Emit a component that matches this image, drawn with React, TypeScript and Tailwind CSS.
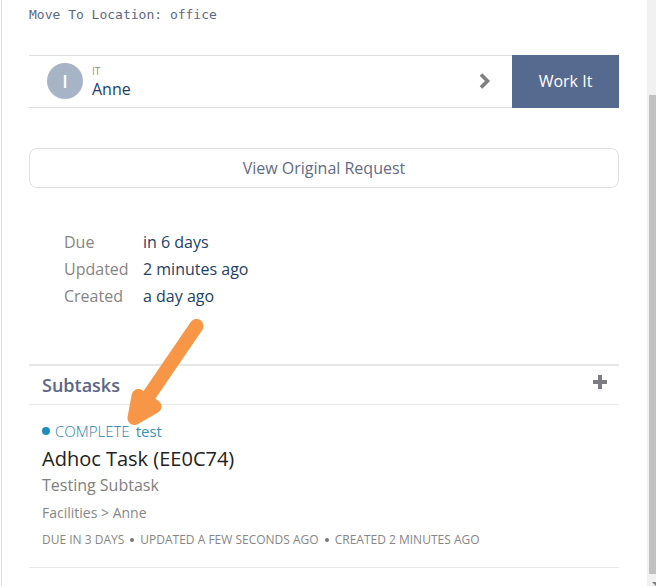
import { useState } from "react";

const details = [
	{ label: "Due", value: "in 6 days" },
	{ label: "Updated", value: "2 minutes ago" },
	{ label: "Created", value: "a day ago" },
];

const history = [
	"DUE IN 3 DAYS",
	"UPDATED A FEW SECONDS AGO",
	"CREATED 2 MINUTES AGO",
];

function AssigneeRow() {
	return (
		<div className="mt-[30px] flex h-[53px]">
			<button className="flex flex-1 items-center border-y border-[#dfdfe1] pl-[18px] pr-[21px] pb-0.5 text-left cursor-pointer">
				<span className="flex size-9 items-center justify-center rounded-full bg-[#a6b4c6] text-lg font-semibold text-white">
					I
				</span>
				<span className="ml-[9px] flex flex-1 flex-col pt-1">
					<span className="text-[10px] leading-3 text-[#909090]">IT</span>
					<span className="text-base leading-6 text-[#1d4068]">Anne</span>
				</span>
				<svg className="h-4 w-3" viewBox="0 0 12 16" aria-hidden="true">
					<path
						d="M2 1.5 8.5 8 2 14.5"
						fill="none"
						stroke="#7f7f7f"
						strokeWidth="3.6"
					/>
				</svg>
			</button>
			<button className="w-[107px] bg-[#56698f] pb-0.5 text-base text-white cursor-pointer">
				Work It
			</button>
		</div>
	);
}

function Subtasks() {
	const [adding, setAdding] = useState(false);

	return (
		<section className="relative mt-[54px]">
			<div className="flex h-[41px] items-center justify-between border-t-2 border-b border-t-[#e6e6e6] border-b-[#e8e8ea] pl-[13px] pr-3">
				<h2 className="text-lg font-semibold text-[#5a6688]">Subtasks</h2>
				<button
					aria-label="Add subtask"
					aria-pressed={adding}
					onClick={() => setAdding(!adding)}
					className="pb-1.5 cursor-pointer"
				>
					<svg className="size-3.5" viewBox="0 0 14 14" aria-hidden="true">
						<path d="M5 0h4v5h5v4H9v5H5V9H0V5h5z" fill="#7c7c82" />
					</svg>
				</button>
			</div>

			<article className="border-b border-[#e8e8ea] pt-[14px] pb-[17px] pl-[13px] text-[#7a7a7a]">
				<div className="flex items-center text-[15px] leading-6 font-light text-[#1b82ae]">
					<span className="size-2 rounded-full bg-[#1f8dbd]" />
					<span className="ml-[5px]">COMPLETE</span>
					<a href="#test" className="ml-1.5 font-normal text-[#3592b8]">
						test
					</a>
				</div>
				<h3 className="text-xl leading-8 text-[#222]">Adhoc Task (EE0C74)</h3>
				<p className="text-base leading-5 text-[#808080]">Testing Subtask</p>
				<p className="mt-2 text-sm leading-5 text-[#868686]">
					Facilities &gt; Anne
				</p>
				<ul className="mt-[7px] flex items-center text-xs leading-5 text-[#868686]">
					{history.map((entry, i) => (
						<li key={entry} className="flex items-center">
							{i > 0 && <span className="mx-1.5 size-1 rounded-full bg-[#777]" />}
							{entry}
						</li>
					))}
				</ul>
			</article>

			{/* Callout arrow pointing at the status */}
			<svg
				className="pointer-events-none absolute -top-[47px] left-[97px] h-[110px] w-20"
				viewBox="0 0 80 110"
				aria-hidden="true"
			>
				<path
					d="M70.5 9 22 80"
					stroke="#f79646"
					strokeWidth="14"
					strokeLinecap="round"
				/>
				<path
					d="M12.5 79 28.5 89.5 8.5 101z"
					fill="#f79646"
					stroke="#f79646"
					strokeWidth="14"
					strokeLinejoin="round"
				/>
			</svg>
		</section>
	);
}

function Scrollbar() {
	return (
		<div className="flex w-[9px] flex-col bg-[#f1f1f1] pl-0.5">
			<div className="h-[95px]" />
			<div className="flex-1 bg-[#c1c1c1]" />
			<div className="flex h-3 items-end justify-end overflow-hidden">
				<svg className="h-1.5 w-1" viewBox="0 0 4 6" aria-hidden="true">
					<path d="M0 2h4v4z" fill="#7f7f7f" />
				</svg>
			</div>
		</div>
	);
}

function App() {
	return (
		<div className="flex min-h-screen bg-white pl-px font-['Open_Sans',sans-serif]">
			<main className="flex-1 border-l border-[#dcdcdf] pl-[27px] pr-7">
				<p className="pt-[5px] font-['DejaVu_Sans_Mono',monospace] text-[13px] leading-5 text-[#5c6884]">
					Move To Location: office
				</p>

				<AssigneeRow />

				<button className="mt-10 h-10 w-full rounded-lg border border-[#dfdfe3] text-base text-[#5f6b87] cursor-pointer">
					View Original Request
				</button>

				<dl className="mt-[41px] grid grid-cols-[79px_1fr] pl-[35px] text-base leading-[27px]">
					{details.map((item) => (
						<div key={item.label} className="contents">
							<dt className="text-[#858585]">{item.label}</dt>
							<dd className="text-[#1d4068]">{item.value}</dd>
						</div>
					))}
				</dl>

				<Subtasks />
			</main>
			<Scrollbar />
		</div>
	);
}

export default App;
